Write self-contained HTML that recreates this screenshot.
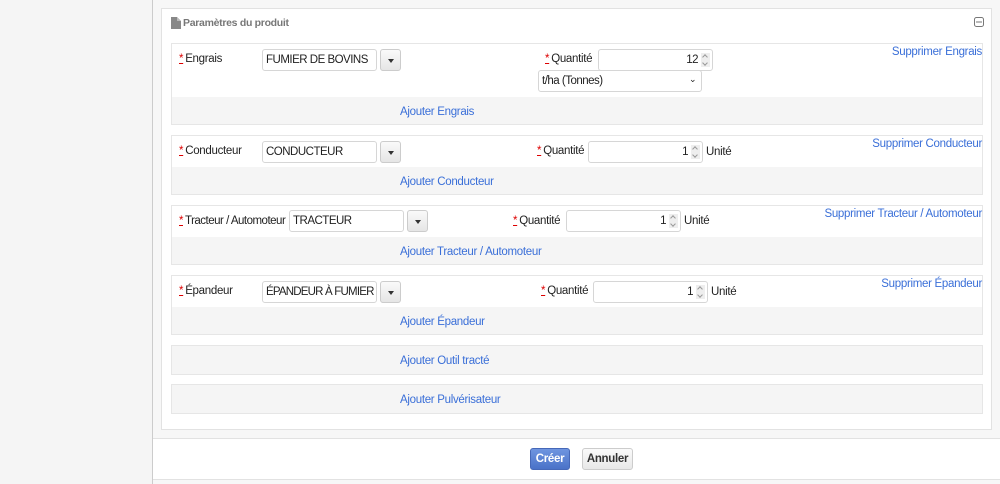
<!DOCTYPE html>
<html><head><meta charset="utf-8"><style>
*{box-sizing:border-box;margin:0;padding:0}
body{width:1000px;height:484px;background:#f5f5f5;font-family:"Liberation Sans",sans-serif;font-size:11.5px;color:#333;position:relative;overflow:hidden;letter-spacing:-0.3px}
.a{position:absolute;white-space:nowrap}
.main{left:152px;top:0;width:848px;height:484px;background:#f7f7f7;border-left:1px solid #ccc}
.panel{left:161px;top:8px;width:831px;height:422px;background:#fff;border:1px solid #e2e2e2}
.row{left:171px;width:812px;border:1px solid #e6e6e6;background:#fff}
.gray{background:#f5f5f5}
.inp{height:22px;border:1px solid #d6d6d6;border-radius:3px;background:#fff;padding:4px 3px;font-size:11.5px;color:#222;overflow:hidden;letter-spacing:-0.5px}
.btn{width:21px;height:22px;border:1px solid #ccc;border-radius:3px;background:linear-gradient(#fafafa,#e6e6e6)}
.btn:after{content:"";position:absolute;left:7px;top:9px;border-left:3.5px solid transparent;border-right:3.5px solid transparent;border-top:4px solid #333}
.num{text-align:right;padding-right:14px}
.spin{position:absolute;right:2px;top:3px;width:9px;height:14px;background:#eee}
.spin:before{content:"";position:absolute;left:2px;top:2px;width:3px;height:3px;border-left:1px solid #999;border-top:1px solid #999;transform:rotate(45deg)}
.spin:after{content:"";position:absolute;left:2px;top:8px;width:3px;height:3px;border-right:1px solid #999;border-bottom:1px solid #999;transform:rotate(45deg)}
.lbl{font-size:11.5px;color:#222}
.lbl b{color:#d00;font-weight:normal;text-decoration:underline;margin-right:2px}
.link{color:#3a6fd8;font-size:11.5px}
</style></head><body>
<div class="a main"></div>
<div class="a" style="left:153px;top:438px;width:847px;height:42px;background:#fff;border-top:1px solid #e2e2e2;border-bottom:1px solid #e2e2e2"></div>
<div class="a panel"></div>
<svg class="a" style="left:171px;top:17px" width="10" height="12"><path d="M0 0H6L10 4V12H0Z" fill="#888"/><path d="M6 0V4H10" fill="#bbb"/></svg>
<div class="a" style="left:183px;top:17px;color:#777;font-weight:bold;font-size:10.5px">Paramètres du produit</div>
<svg class="a" style="left:974px;top:17px" width="10" height="10"><rect x="0.5" y="0.5" width="9" height="9" rx="2" fill="none" stroke="#777"/><path d="M2 5H8" stroke="#777"/></svg>

<div class="a row" style="top:43px;height:82px"></div>
<div class="a row gray" style="top:97px;height:28px;border-top:none"></div>
<div class="a lbl" style="left:179px;top:53px"><b>*</b>Engrais</div>
<div class="a inp" style="left:262px;top:49px;width:115px">FUMIER DE BOVINS</div>
<div class="a btn" style="left:380px;top:49px"></div>
<div class="a lbl" style="left:545px;top:53px"><b>*</b>Quantité</div>
<div class="a inp num" style="left:598px;top:49px;width:115px">12<span class="spin"></span></div>
<div class="a inp" style="left:538px;top:70px;width:164px">t/ha (Tonnes)<span style="position:absolute;right:5px;top:3px;font-size:9px">⌄</span></div>
<div class="a link" style="right:18px;top:46px">Supprimer Engrais</div>
<div class="a link" style="left:400px;top:106px">Ajouter Engrais</div>

<div class="a row" style="top:135px;height:60px"></div>
<div class="a row gray" style="top:167px;height:28px;border-top:none"></div>
<div class="a lbl" style="left:179px;top:145px"><b>*</b>Conducteur</div>
<div class="a inp" style="left:262px;top:141px;width:115px">CONDUCTEUR</div>
<div class="a btn" style="left:380px;top:141px"></div>
<div class="a lbl" style="left:537px;top:145px"><b>*</b>Quantité</div>
<div class="a inp num" style="left:588px;top:141px;width:115px">1<span class="spin"></span></div>
<div class="a lbl" style="left:706px;top:146px">Unité</div>
<div class="a link" style="right:18px;top:138px">Supprimer Conducteur</div>
<div class="a link" style="left:400px;top:176px">Ajouter Conducteur</div>

<div class="a row" style="top:205px;height:60px"></div>
<div class="a row gray" style="top:237px;height:28px;border-top:none"></div>
<div class="a lbl" style="left:179px;top:215px;letter-spacing:-0.5px"><b>*</b>Tracteur / Automoteur</div>
<div class="a inp" style="left:289px;top:210px;width:115px">TRACTEUR</div>
<div class="a btn" style="left:407px;top:210px"></div>
<div class="a lbl" style="left:513px;top:215px"><b>*</b>Quantité</div>
<div class="a inp num" style="left:566px;top:210px;width:115px">1<span class="spin"></span></div>
<div class="a lbl" style="left:684px;top:215px">Unité</div>
<div class="a link" style="right:18px;top:208px">Supprimer Tracteur / Automoteur</div>
<div class="a link" style="left:400px;top:246px">Ajouter Tracteur / Automoteur</div>

<div class="a row" style="top:275px;height:60px"></div>
<div class="a row gray" style="top:307px;height:28px;border-top:none"></div>
<div class="a lbl" style="left:179px;top:285px"><b>*</b>Épandeur</div>
<div class="a inp" style="left:262px;top:281px;width:115px;letter-spacing:-0.8px">ÉPANDEUR À FUMIER</div>
<div class="a btn" style="left:380px;top:281px"></div>
<div class="a lbl" style="left:541px;top:285px"><b>*</b>Quantité</div>
<div class="a inp num" style="left:593px;top:281px;width:115px">1<span class="spin"></span></div>
<div class="a lbl" style="left:711px;top:286px">Unité</div>
<div class="a link" style="right:18px;top:278px">Supprimer Épandeur</div>
<div class="a link" style="left:400px;top:316px">Ajouter Épandeur</div>

<div class="a row gray" style="top:345px;height:30px"></div>
<div class="a link" style="left:400px;top:355px">Ajouter Outil tracté</div>
<div class="a row gray" style="top:384px;height:30px"></div>
<div class="a link" style="left:400px;top:394px">Ajouter Pulvérisateur</div>

<div class="a" style="left:530px;top:448px;width:40px;height:22px;background:linear-gradient(#6f95e0,#4a72c8);border:1px solid #4668b8;border-radius:3px;color:#fff;font-weight:bold;text-align:center;line-height:20px">Créer</div>
<div class="a" style="left:582px;top:448px;width:51px;height:22px;background:linear-gradient(#fafafa,#e8e8e8);border:1px solid #ccc;border-radius:3px;color:#333;font-weight:bold;text-align:center;line-height:20px">Annuler</div>
</body></html>
